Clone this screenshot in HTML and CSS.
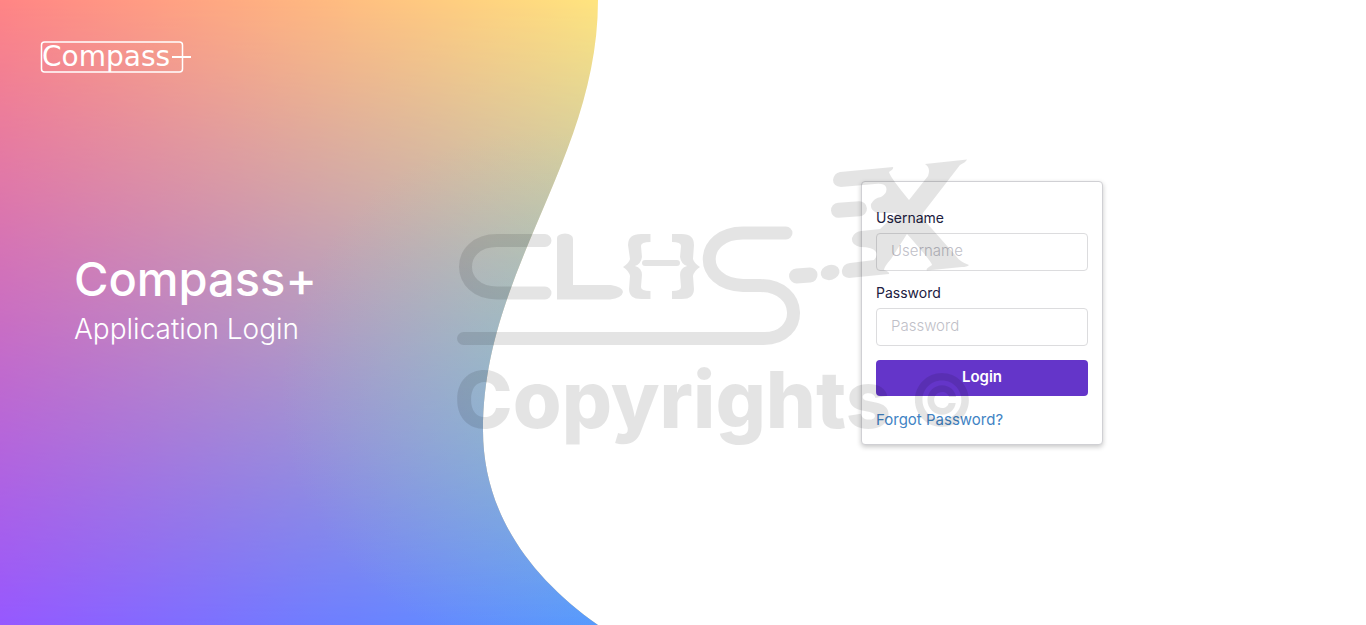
FILE: index.html
```html
<!DOCTYPE html>
<html lang="en">
<head>
<meta charset="utf-8">
<meta name="viewport" content="width=device-width, initial-scale=1">
<title>Compass+ Application Login</title>
<link rel="stylesheet" href="styles.css">
</head>
<body>
<div class="page">
  <section class="brand">
    <svg class="brand-bg" viewBox="0 0 598 625" preserveAspectRatio="none" aria-hidden="true">
      <defs>
        <linearGradient id="warm"><stop offset="0" stop-color="#ff8585"/><stop offset=".5" stop-color="#ffb681"/><stop offset="1" stop-color="#ffe47f"/></linearGradient>
        <linearGradient id="cool"><stop offset="0" stop-color="#9658ff"/><stop offset=".5" stop-color="#717bff"/><stop offset="1" stop-color="#5599ff"/></linearGradient>
        <linearGradient id="fade" x2="0" y2="1"><stop offset="0" stop-color="#000"/><stop offset="1" stop-color="#fff"/></linearGradient>
        <radialGradient id="tint" gradientUnits="userSpaceOnUse" cx="540" cy="390" r="260"><stop offset="0" stop-color="#88cbc4" stop-opacity=".4"/><stop offset="1" stop-color="#88cbc4" stop-opacity="0"/></radialGradient>
        <mask id="down" style="mask-type:luminance"><rect width="598" height="625" fill="url(#fade)"/></mask>
        <clipPath id="wave"><path d="M0 0H598C598 160 483 270 483 430C483 510 527 575 598 625H0Z"/></clipPath>
      </defs>
      <g clip-path="url(#wave)">
        <rect width="598" height="625" fill="url(#warm)"/>
        <rect width="598" height="625" fill="url(#cool)" mask="url(#down)"/>
        <rect width="598" height="625" fill="url(#tint)"/>
      </g>
    </svg>
    <header class="brand-header">
      <svg class="logo" viewBox="0 0 152 32" role="img" aria-label="Compass+">
        <rect class="logo-box" x="1.500" y="1" width="141" height="30" rx="3"/>
        <path class="logo-plus" d="M132 16H151"/>
        <text class="logo-text" x="2" y="25">Compass</text>
      </svg>
    </header>
    <div class="hero">
      <h1 class="hero-title">Compass+</h1>
      <p class="hero-subtitle">Application Login</p>
    </div>
  </section>
  <main class="login">
    <form class="card">
      <div class="field">
        <label class="label" for="username">Username</label>
        <input class="input" id="username" type="text" placeholder="Username">
      </div>
      <div class="field">
        <label class="label" for="password">Password</label>
        <input class="input" id="password" type="password" placeholder="Password">
      </div>
      <button class="button" type="submit">Login</button>
      <a class="forgot" href="#">Forgot Password?</a>
    </form>
  </main>
  <svg class="watermark" viewBox="0 0 1366 625" aria-hidden="true">
    <g class="mark">
      <g class="stroke">
        <path d="M545 240.500H497C455 240.500 455 293 497 293H545"/>
        <path d="M786 233H743C699 233 697 284 743 285.500H760C804 285.500 804 338.500 764 338.500H463.500"/>
      </g>
      <path d="M557 238Q557 234 565 233.500Q573 234 573 239V285H611Q623 287 623 292Q622 298 610 299.500H557Z"/>
      <path d="M650.500 234V242Q641 242 641 246L642 257Q641 264 635 266Q642 268 642 275L641 287Q641 291 650.500 291V299H641Q629 299 629 289L630 276Q629 271 623 267Q629 263 630 259L628 245Q628 234 641 234Z"/>
      <path d="M672 234V242Q681 242 681 246L680 257Q681 264 687 266Q680 268 680 275L681 287Q681 291 672 291V299H682Q694 299 694 289L693 276Q694 271 700 267Q694 263 693 259L694 245Q694 234 682 234Z"/>
      <rect x="642" y="260" width="38" height="6" rx="3"/>
      <rect x="789" y="268" width="28.500" height="15" rx="7.500" transform="rotate(-4 803 275)"/>
      <ellipse cx="830" cy="272.500" rx="9.500" ry="7.500" transform="rotate(-15 830 272)"/>
      <rect x="831" y="202" width="36" height="15" rx="7.500" transform="rotate(-4 849 210)"/>
      <path d="M840 172L893 167Q894 169 889 172Q890 177 909 200L928 176Q931 168 925 164L967 159.500Q966 162 960 165L923 213Q922 217 925 221L956 256Q960 262 969 265Q967 267 962 267L927 270.500Q925 269 932 265Q932 262 907 234L891 259Q884 267 884 270Q890 272 889 274L849 278Q841 277 842 270Q843 264 850 263L874 260Q878 256 876 252Q873 247 860 247Q851 245 852 238Q854 232 861 231L880 229L897 213H877Q870 210 871 204Q874 198 881 197Q888 193 886 187Q884 183 875 184L841 187Q833 186 833 180Q834 173 840 172Z"/>
      <text class="mark-text" x="454" y="428">Copyrights</text>
      <text class="mark-sign" x="909" y="426">©</text>
    </g>
  </svg>
</div>
</body>
</html>
```
FILE: styles.css
```css
* {
  box-sizing: border-box;
}

body {
  margin: 0;
  background: #fff;
  font-family: Inter, "Liberation Sans", sans-serif;
  color: #212040;
}

.page {
  position: relative;
  display: grid;
  grid-template-columns: 598fr 768fr;
  min-height: 100vh;
}

.brand {
  position: relative;
  display: flex;
  flex-direction: column;
  color: #fff;
}

.brand-bg {
  position: absolute;
  inset: 0;
  width: 100%;
  height: 100%;
}

.brand-header {
  position: relative;
  display: flex;
  padding: 41px 40px 0;
}

.logo {
  width: 152px;
  height: 32px;
  overflow: visible;
}

.logo-box {
  fill: none;
  stroke: #fff;
  stroke-width: 1.5;
}

.logo-plus {
  stroke: #fff;
  stroke-width: 2;
}

.logo-text {
  fill: #fff;
  font: 28px "DejaVu Sans", sans-serif;
}

.hero {
  position: relative;
  flex: 1;
  display: flex;
  flex-direction: column;
  justify-content: center;
  padding: 0 74px 100px;
}

.hero-title {
  margin: 0;
  font-size: 47px;
  line-height: 60px;
  font-weight: 500;
}

.hero-subtitle {
  margin: 0;
  font-size: 28px;
  line-height: 40px;
  font-weight: 300;
}

.login {
  display: flex;
  align-items: center;
  justify-content: center;
}

.card {
  display: flex;
  flex-direction: column;
  width: 242px;
  padding: 26px 14px 14px;
  border: 1px solid #d0d0d4;
  border-radius: 4px;
  background: #fff;
  box-shadow: 0 2px 5px rgba(0, 0, 0, 0.22);
}

.field {
  display: flex;
  flex-direction: column;
  gap: 5px;
  margin-bottom: 12px;
}

.label {
  font-size: 14px;
  line-height: 20px;
}

.input {
  width: 100%;
  height: 38px;
  padding: 0 14px 2px;
  border: 1px solid #dcdcde;
  border-radius: 4px;
  background: #fff;
  font: 300 15px Inter, "Liberation Sans", sans-serif;
  color: #212040;
}

.input::placeholder {
  color: #bfbfc8;
  opacity: 1;
}

.button {
  height: 36px;
  margin-top: 2px;
  padding: 0 0 2px;
  border: 0;
  border-radius: 4px;
  background: #6435c9;
  font: 600 15px Inter, "Liberation Sans", sans-serif;
  color: #fff;
}

.forgot {
  align-self: flex-start;
  margin-top: 14px;
  font-size: 15px;
  line-height: 20px;
  color: #4183c4;
  text-decoration: none;
}

.watermark {
  position: absolute;
  inset: 0;
  width: 100%;
  height: 100%;
  pointer-events: none;
}

.mark {
  fill: #000;
  opacity: 0.1;
}

.stroke {
  fill: none;
  stroke: #000;
  stroke-width: 13;
  stroke-linecap: round;
}

.mark-text {
  font: 800 79px Inter, "Liberation Sans", sans-serif;
}

.mark-sign {
  font: 600 72px Inter, "Liberation Sans", sans-serif;
}
```
